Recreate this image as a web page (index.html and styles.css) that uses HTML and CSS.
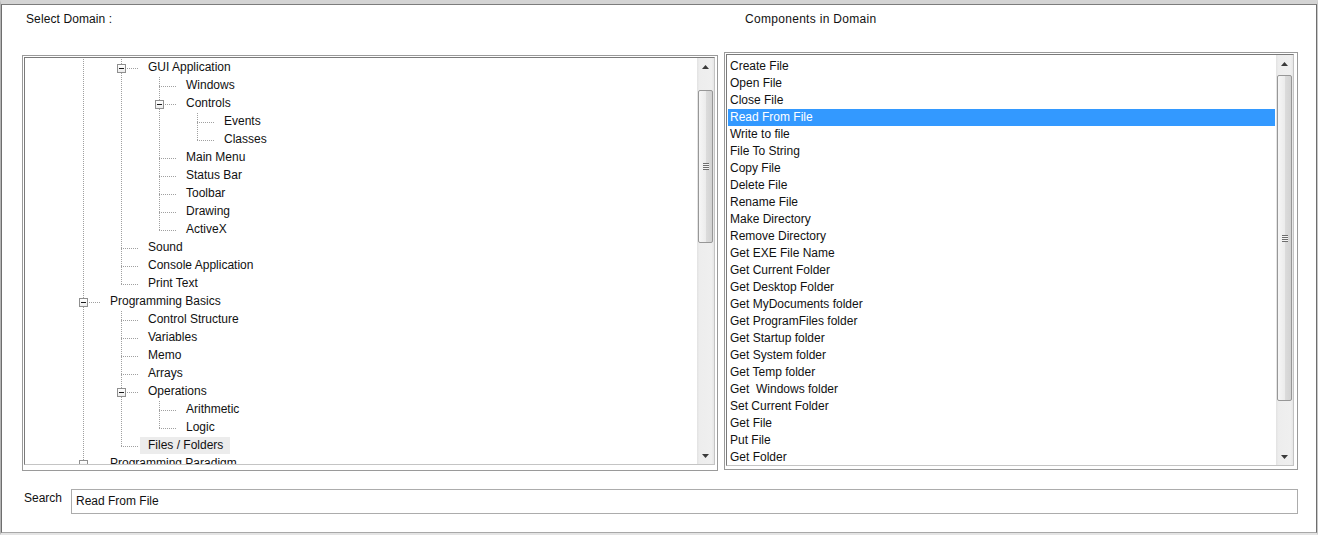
FILE: index.html
```html
<!DOCTYPE html>
<html>
<head>
<meta charset="utf-8">
<link rel="stylesheet" href="styles.css">
</head>
<body>
<div class="window">
  <div class="client">
    <div class="cols">
      <div class="col col-left">
        <div class="caption">Select Domain :</div>
        <div class="frame frame-left">
          <div class="box box-left">
            <div class="tree">
              <div class="row"><span class="g"></span><span class="c"><i class="tog"></i></span><span class="lbl">GUI Application</span></div>
              <div class="row"><span class="g"></span><span class="g"></span><span class="c"></span><span class="lbl">Windows</span></div>
              <div class="row"><span class="g"></span><span class="g"></span><span class="c"><i class="tog"></i></span><span class="lbl">Controls</span></div>
              <div class="row"><span class="g"></span><span class="g"></span><span class="g"></span><span class="c"></span><span class="lbl">Events</span></div>
              <div class="row"><span class="g"></span><span class="g"></span><span class="g"></span><span class="cl"></span><span class="lbl">Classes</span></div>
              <div class="row"><span class="g"></span><span class="g"></span><span class="c"></span><span class="lbl">Main Menu</span></div>
              <div class="row"><span class="g"></span><span class="g"></span><span class="c"></span><span class="lbl">Status Bar</span></div>
              <div class="row"><span class="g"></span><span class="g"></span><span class="c"></span><span class="lbl">Toolbar</span></div>
              <div class="row"><span class="g"></span><span class="g"></span><span class="c"></span><span class="lbl">Drawing</span></div>
              <div class="row"><span class="g"></span><span class="g"></span><span class="cl"></span><span class="lbl">ActiveX</span></div>
              <div class="row"><span class="g"></span><span class="c"></span><span class="lbl">Sound</span></div>
              <div class="row"><span class="g"></span><span class="c"></span><span class="lbl">Console Application</span></div>
              <div class="row"><span class="g"></span><span class="cl"></span><span class="lbl">Print Text</span></div>
              <div class="row"><span class="c"><i class="tog"></i></span><span class="lbl">Programming Basics</span></div>
              <div class="row"><span class="g"></span><span class="c"></span><span class="lbl">Control Structure</span></div>
              <div class="row"><span class="g"></span><span class="c"></span><span class="lbl">Variables</span></div>
              <div class="row"><span class="g"></span><span class="c"></span><span class="lbl">Memo</span></div>
              <div class="row"><span class="g"></span><span class="c"></span><span class="lbl">Arrays</span></div>
              <div class="row"><span class="g"></span><span class="c"><i class="tog"></i></span><span class="lbl">Operations</span></div>
              <div class="row"><span class="g"></span><span class="g"></span><span class="c"></span><span class="lbl">Arithmetic</span></div>
              <div class="row"><span class="g"></span><span class="g"></span><span class="cl"></span><span class="lbl">Logic</span></div>
              <div class="row"><span class="g"></span><span class="cl"></span><span class="lbl hot">Files / Folders</span></div>
              <div class="row"><span class="c"><i class="tog"></i></span><span class="lbl">Programming Paradigm</span></div>
            </div>
            <div class="vscroll">
              <div class="sbtn"><svg width="7" height="4" viewBox="0 0 7 4"><path d="M0 4 L3.5 0 L7 4 Z" fill="#3a3a3a"/></svg></div>
              <div class="track track-a-left"></div>
              <div class="thumb thumb-left"><span class="grip"></span></div>
              <div class="track track-b"></div>
              <div class="sbtn"><svg width="7" height="4" viewBox="0 0 7 4"><path d="M0 0 L7 0 L3.5 4 Z" fill="#3a3a3a"/></svg></div>
            </div>
          </div>
        </div>
      </div>
      <div class="col col-right">
        <div class="caption caption-right">Components in Domain</div>
        <div class="frame frame-right">
          <div class="box box-right">
            <ul class="list">
              <li>Create File</li>
              <li>Open File</li>
              <li>Close File</li>
              <li class="sel">Read From File</li>
              <li>Write to file</li>
              <li>File To String</li>
              <li>Copy File</li>
              <li>Delete File</li>
              <li>Rename File</li>
              <li>Make Directory</li>
              <li>Remove Directory</li>
              <li>Get EXE File Name</li>
              <li>Get Current Folder</li>
              <li>Get Desktop Folder</li>
              <li>Get MyDocuments folder</li>
              <li>Get ProgramFiles folder</li>
              <li>Get Startup folder</li>
              <li>Get System folder</li>
              <li>Get Temp folder</li>
              <li>Get  Windows folder</li>
              <li>Set Current Folder</li>
              <li>Get File</li>
              <li>Put File</li>
              <li>Get Folder</li>
            </ul>
            <div class="vscroll">
              <div class="sbtn"><svg width="7" height="4" viewBox="0 0 7 4"><path d="M0 4 L3.5 0 L7 4 Z" fill="#3a3a3a"/></svg></div>
              <div class="track track-a-right"></div>
              <div class="thumb thumb-right"><span class="grip"></span></div>
              <div class="track track-b"></div>
              <div class="sbtn"><svg width="7" height="4" viewBox="0 0 7 4"><path d="M0 0 L7 0 L3.5 4 Z" fill="#3a3a3a"/></svg></div>
            </div>
          </div>
        </div>
      </div>
    </div>
    <div class="search-row">
      <span class="search-label">Search</span>
      <div class="search-input">Read From File</div>
    </div>
  </div>
</div>
</body>
</html>
```

FILE: styles.css
```css
html, body {
  margin: 0;
  padding: 0;
  background: #ffffff;
}

body {
  font-family: "Liberation Sans", Arial, sans-serif;
  font-size: 12px;
  color: #000;
}

.window {
  width: 1318px;
  height: 535px;
  box-sizing: border-box;
  border-top: 4px solid #d4d4d4;
  border-left: 1px solid #b4b4b4;
  border-right: 1px solid #c8c8c8;
  border-bottom: 2px solid #e4e4e4;
}

.client {
  height: 100%;
  box-sizing: border-box;
  border-top: 1px solid #7c7c7c;
  border-left: 1px solid #6e6e6e;
  border-right: 1px solid #6e6e6e;
  border-bottom: 1px solid #a8a8a8;
  background: #fff;
  padding-left: 20px;
}

.cols {
  display: flex;
  gap: 6px;
}

.col-left {
  width: 696px;
}

.col-right {
  width: 574px;
}

.caption {
  height: 50px;
  box-sizing: border-box;
  padding: 7px 0 0 4px;
  line-height: 14px;
  color: #111;
  letter-spacing: 0.1px;
}

.caption-right {
  height: 47px;
  padding-left: 21px;
  letter-spacing: 0.3px;
}

.frame {
  box-sizing: border-box;
  border: 1px solid #9a9a9a;
  padding: 1px;
  background: #fff;
}

.frame-left {
  height: 416px;
  padding-right: 2px;
}

.frame-right {
  height: 418px;
  padding-right: 3px;
}

.box {
  box-sizing: border-box;
  display: flex;
  border: 1px solid #7a7a7a;
  border-right-color: #c4c4c4;
  border-bottom-color: #c4c4c4;
  background: #fff;
}

.box-left {
  height: 408px;
}

.box-right {
  height: 412px;
}

/* ---------- tree ---------- */
.tree {
  flex: 1;
  overflow: hidden;
  padding: 1px 0 0 39px;
}

.row {
  display: flex;
  height: 18px;
}

.g, .c, .cl {
  flex: none;
  width: 38px;
  height: 18px;
  display: flex;
  align-items: flex-start;
}

.g {
  background: repeating-linear-gradient(to bottom, #a0a0a0 0 1px, transparent 1px 2px) 19px 0 / 1px 18px no-repeat;
}

.c {
  background:
    repeating-linear-gradient(to bottom, #a0a0a0 0 1px, transparent 1px 2px) 19px 0 / 1px 18px no-repeat,
    repeating-linear-gradient(to right, #a0a0a0 0 1px, transparent 1px 2px) 19px 9px / 18px 1px no-repeat;
}

.cl {
  background:
    repeating-linear-gradient(to bottom, #a0a0a0 0 1px, transparent 1px 2px) 19px 0 / 1px 10px no-repeat,
    repeating-linear-gradient(to right, #a0a0a0 0 1px, transparent 1px 2px) 19px 9px / 18px 1px no-repeat;
}

.tog {
  width: 9px;
  height: 9px;
  box-sizing: border-box;
  margin: 5px 0 0 15px;
  border: 1px solid #8f8f8f;
  background: linear-gradient(#ffffff, #ececec);
  display: flex;
  align-items: center;
  justify-content: center;
}

.tog::before {
  content: "";
  width: 5px;
  height: 1px;
  background: #1a1a1a;
}

.lbl {
  height: 17px;
  line-height: 16px;
  padding: 0 7px 0 8px;
  white-space: nowrap;
  color: #111;
}

.lbl.hot {
  background: #ececec;
}

/* ---------- list ---------- */
.list {
  flex: 1;
  list-style: none;
  margin: 0;
  padding: 3px 1px 0 1px;
  overflow: hidden;
}

.list li {
  height: 17px;
  line-height: 17px;
  padding-left: 2px;
  white-space: pre;
  color: #111;
}

.list li.sel {
  background: #3399ff;
  color: #fff;
}

/* ---------- scrollbar ---------- */
.vscroll {
  flex: none;
  width: 17px;
  display: flex;
  flex-direction: column;
  background: linear-gradient(to right, #e2e2e2, #ededed 15%, #efefef 85%, #e6e6e6);
}

.sbtn {
  height: 17px;
  flex: none;
  display: flex;
  align-items: center;
  justify-content: center;
}

.track-a-left {
  height: 15px;
  flex: none;
}

.track-a-right {
  height: 3px;
  flex: none;
}

.track-b {
  flex: 1;
}

.thumb {
  flex: none;
  margin: 0 1px;
  box-sizing: border-box;
  border: 1px solid #979797;
  border-radius: 2px;
  background: linear-gradient(to right, #f6f6f6, #ececec 50%, #dcdcdc 52%, #d2d2d2);
  display: flex;
  align-items: center;
  justify-content: center;
}

.thumb-left {
  height: 153px;
}

.thumb-right {
  height: 326px;
}

.grip {
  width: 6px;
  height: 7px;
  background: repeating-linear-gradient(to bottom, #6e6e6e 0 1px, #f4f4f4 1px 2px);
}

/* ---------- search ---------- */
.search-row {
  display: flex;
  align-items: flex-start;
  margin-top: 18px;
  padding-left: 2px;
}

.search-label {
  width: 47px;
  margin-top: 2px;
  line-height: 14px;
  color: #111;
}

.search-input {
  width: 1227px;
  height: 25px;
  box-sizing: border-box;
  border: 1px solid #acacac;
  padding-left: 4px;
  line-height: 23px;
  color: #111;
}
```
